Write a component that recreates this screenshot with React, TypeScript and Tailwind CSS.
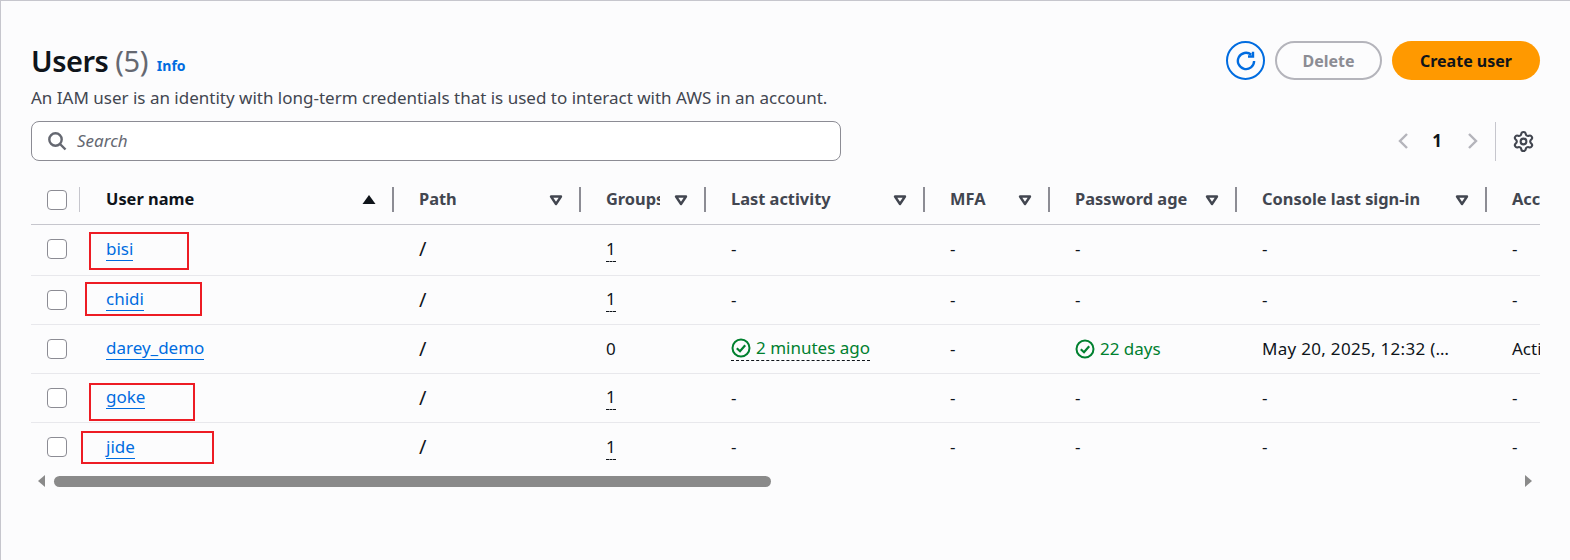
import React from "react";
import { Settings } from "lucide-react";

const cols = ["w-[49px]", "w-[314px]", "w-[187px]", "w-[125px]", "w-[219px]", "w-[125px]", "w-[187px]", "w-[250px]", "w-[200px]"];

function SortIcon({ active }: { active?: boolean }) {
  if (active) {
    return (
      <svg width="16" height="16" viewBox="0 0 16 16" className="ml-auto shrink-0">
        <path d="M8 3 L14.5 12 H1.5 Z" fill="#0f141a" />
      </svg>
    );
  }
  return (
    <svg width="16" height="16" viewBox="0 0 16 16" className="ml-auto shrink-0">
      <path d="M3 4.5 H13 L8 12 Z" fill="none" stroke="#424650" strokeWidth="2.4" strokeLinejoin="round" />
    </svg>
  );
}

function Check({ className = "" }: { className?: string }) {
  return <div className={`h-5 w-5 shrink-0 rounded-[4px] border-[1.5px] border-[#8c8c94] bg-white ${className}`} />;
}

function StatusOk() {
  return (
    <svg width="20" height="20" viewBox="0 0 20 20" className="shrink-0">
      <circle cx="10" cy="10" r="8.5" fill="none" stroke="#00802f" strokeWidth="2" />
      <path d="M5.8 10.2 L9 13.2 L14.2 7.2" fill="none" stroke="#00802f" strokeWidth="2.2" />
    </svg>
  );
}

function Head({ i, label, sort = true, active, clip }: { i: number; label: string; sort?: boolean; active?: boolean; clip?: boolean }) {
  return (
    <div className={`${cols[i]} relative flex h-full shrink-0 items-center ${i === 1 ? "pl-[26px]" : "pl-[25px]"} pr-[17px]`}>
      <span className={`whitespace-nowrap ${clip ? "w-[54px] overflow-hidden" : ""} ${active ? "text-[#0f141a]" : "text-[#424650]"}`}>
        {label}
      </span>
      {sort && <SortIcon active={active} />}
      {i < 8 && <div className="absolute right-0 top-[12px] h-[25px] w-[2px] bg-[#8c8c94]" />}
    </div>
  );
}

function Cell({ i, children, className = "" }: { i: number; children?: React.ReactNode; className?: string }) {
  return <div className={`${cols[i]} relative flex h-full shrink-0 items-center ${i === 1 ? "pl-[26px]" : "pl-[25px]"} ${className}`}>{children}</div>;
}

function Dash() {
  return <span>-</span>;
}

function One() {
  return <span className="border-b border-dashed border-[#0f141a] leading-[24px]">1</span>;
}

type Row = { name: string; box?: string; groups: boolean; active?: boolean };

const rows: Row[] = [
  { name: "bisi", box: "left-[9px] top-[7px] h-[38px] w-[100px]", groups: true },
  { name: "chidi", box: "left-[5px] top-[6px] h-[34px] w-[117px]", groups: true },
  { name: "darey_demo", groups: false, active: true },
  { name: "goke", box: "left-[9px] top-[9px] h-[38px] w-[106px]", groups: true },
  { name: "jide", box: "left-[1px] top-[8px] h-[33px] w-[133px]", groups: true },
];

export default function App() {
  return (
    <div
      className="h-[560px] w-[1570px] overflow-hidden border-l border-t border-[#c6c6cd] bg-[#fcfcfd] pl-[30px] pr-[30px] pt-[40px] text-[17px] text-[#0f141a]"
      style={{ fontFamily: '"Noto Sans", sans-serif' }}
    >
      <div className="flex items-start justify-between">
        <div>
          <div className="flex h-[40px] items-center">
            <h1 className="text-[29px] font-semibold leading-[40px] tracking-[-0.5px]">
              Users <span className="font-normal text-[#656871]">(5)</span>
            </h1>
            <a className="ml-[9px] mt-[9px] text-[14px] font-bold text-[#006ce0]">Info</a>
          </div>
          <p className="mt-[5px] text-[17px] leading-[24px] text-[#424650]">
            An IAM user is an identity with long-term credentials that is used to interact with AWS in an account.
          </p>
        </div>
        <div className="flex items-center">
          <div className="flex h-[39px] w-[39px] items-center justify-center rounded-full border-2 border-[#006ce0]">
            <svg width="20" height="20" viewBox="0 0 16 16" fill="none" stroke="#006ce0" strokeWidth="1.9">
              <path d="M14.5 8 A6.5 6.5 0 1 1 12.2 3" />
              <path d="M13.6 0.5 V4.4 H9.6" />
            </svg>
          </div>
          <button className="ml-[10px] h-[39px] w-[107px] rounded-full border-2 border-[#b4b4bb] text-[16px] font-bold text-[#8c8c94]">
            Delete
          </button>
          <button className="ml-[10px] h-[39px] w-[148px] rounded-full bg-[#ff9900] text-[16px] font-bold text-[#0f141a]">
            Create user
          </button>
        </div>
      </div>

      <div className="mt-[11px] flex items-center justify-between">
        <div className="flex h-[40px] w-[810px] items-center rounded-[8px] border border-[#8c8c94] bg-white pl-[15px]">
          <svg width="20" height="20" viewBox="0 0 20 20" className="shrink-0">
            <circle cx="8.5" cy="8.5" r="6.2" fill="none" stroke="#656871" strokeWidth="2.4" />
            <path d="M13 13 L18.5 18.5" stroke="#656871" strokeWidth="2.4" />
          </svg>
          <span className="ml-[10px] italic text-[#656871]">Search</span>
        </div>
        <div className="flex h-[40px] items-center">
          <svg width="16" height="18" viewBox="0 0 16 18">
            <path d="M12 2 L5 9 L12 16" fill="none" stroke="#b4b4bb" strokeWidth="2.4" />
          </svg>
          <span className="ml-[21px] w-[10px] text-center text-[17px] font-bold">1</span>
          <svg width="16" height="18" viewBox="0 0 16 18" className="ml-[23px]">
            <path d="M4 2 L11 9 L4 16" fill="none" stroke="#b4b4bb" strokeWidth="2.4" />
          </svg>
          <div className="ml-[14px] h-[39px] w-px bg-[#c6c6cd]" />
          <Settings size={23} strokeWidth={2.2} color="#424650" className="ml-[16px] mr-[5px]" />
        </div>
      </div>

      <div className="w-[1509px] overflow-hidden">
        <div className="mt-[14px] flex h-[50px] w-[1660px] items-center border-b border-[#c6c6cd] text-[16.4px] font-bold">
          <div className={`${cols[0]} relative flex h-full shrink-0 items-center pl-[16px]`}>
            <Check />
            <div className="absolute right-0 top-[12px] h-[25px] w-[1px] bg-[#c6c6cd]" />
          </div>
          <Head i={1} label="User name" active />
          <Head i={2} label="Path" />
          <Head i={3} label="Groups" clip />
          <Head i={4} label="Last activity" />
          <Head i={5} label="MFA" />
          <Head i={6} label="Password age" />
          <Head i={7} label="Console last sign-in" />
          <Head i={8} label="Access key ID" sort={false} />
        </div>
        {rows.map((r, idx) => (
          <div key={r.name} className={`flex w-[1660px] items-start ${idx === 0 ? "h-[51px] pb-[2px]" : "h-[49px] pb-[1px]"} ${idx < 4 ? "border-b border-[#e8e8ec]" : ""}`}>
            <div className={`${cols[0]} flex h-full shrink-0 items-center pl-[16px]`}>
              <Check />
            </div>
            <Cell i={1}>
              <a className="border-b border-[#006ce0] leading-[22px] text-[#006ce0]">{r.name}</a>
              {r.box && <div className={`absolute border-2 border-[#ed1c24] ${r.box}`} />}
            </Cell>
            <Cell i={2}>
              <span className="text-[20px]">/</span>
            </Cell>
            <Cell i={3}>{r.groups ? <One /> : <span>0</span>}</Cell>
            <Cell i={4}>
              {r.active ? (
                <span className="flex items-center gap-[5px] border-b border-dashed border-[#0f141a] leading-[24px] text-[#00802f]">
                  <StatusOk />2 minutes ago
                </span>
              ) : (
                <Dash />
              )}
            </Cell>
            <Cell i={5}>
              <Dash />
            </Cell>
            <Cell i={6}>
              {r.active ? (
                <span className="flex items-center gap-[5px] text-[#00802f]">
                  <StatusOk />
                  22 days
                </span>
              ) : (
                <Dash />
              )}
            </Cell>
            <Cell i={7}>{r.active ? <span className="whitespace-nowrap tracking-[0.3px]">May 20, 2025, 12:32 (…</span> : <Dash />}</Cell>
            <Cell i={8}>{r.active ? <span className="whitespace-nowrap">Active</span> : <Dash />}</Cell>
          </div>
        ))}
      </div>

      <div className="mt-[3px] flex h-[12px] w-[1509px] items-center">
        <svg width="8" height="12" viewBox="0 0 8 12" className="ml-[7px] shrink-0">
          <path d="M7 0 V12 L0 6 Z" fill="#8a8a8a" />
        </svg>
        <div className="ml-[8px] h-[11px] w-[717px] rounded-full bg-[#8a8a8a]" />
        <svg width="8" height="12" viewBox="0 0 8 12" className="ml-auto mr-[8px] shrink-0">
          <path d="M1 0 V12 L8 6 Z" fill="#8a8a8a" />
        </svg>
      </div>
    </div>
  );
}
